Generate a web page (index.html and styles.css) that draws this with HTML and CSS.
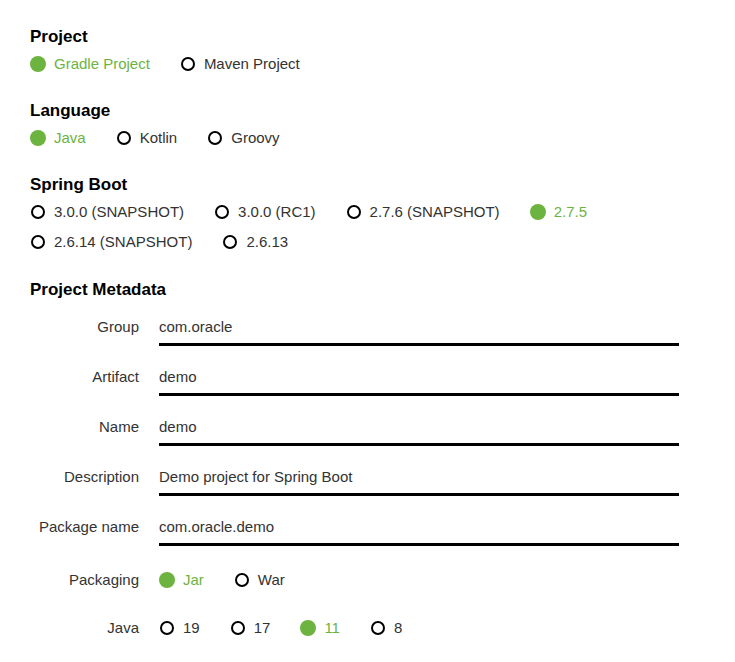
FILE: index.html
```html
<!DOCTYPE html>
<html lang="en">
<head>
  <meta charset="UTF-8">
  <title>Spring Initializr</title>
  <link rel="stylesheet" href="styles.css">
</head>
<body>
  <div class="section">
    <h2>Project</h2>
    <div class="radios">
      <span class="radio checked"><i></i>Gradle Project</span>
      <span class="radio"><i></i>Maven Project</span>
    </div>
  </div>

  <div class="section">
    <h2>Language</h2>
    <div class="radios">
      <span class="radio checked"><i></i>Java</span>
      <span class="radio"><i></i>Kotlin</span>
      <span class="radio"><i></i>Groovy</span>
    </div>
  </div>

  <div class="section boot">
    <h2>Spring Boot</h2>
    <div class="radios wrap">
      <span class="radio"><i></i>3.0.0 (SNAPSHOT)</span>
      <span class="radio"><i></i>3.0.0 (RC1)</span>
      <span class="radio"><i></i>2.7.6 (SNAPSHOT)</span>
      <span class="radio checked"><i></i>2.7.5</span>
      <span class="radio"><i></i>2.6.14 (SNAPSHOT)</span>
      <span class="radio"><i></i>2.6.13</span>
    </div>
  </div>

  <div class="section meta">
    <h2>Project Metadata</h2>
    <div class="field"><label>Group</label><div class="input">com.oracle</div></div>
    <div class="field"><label>Artifact</label><div class="input">demo</div></div>
    <div class="field"><label>Name</label><div class="input">demo</div></div>
    <div class="field"><label>Description</label><div class="input">Demo project for Spring Boot</div></div>
    <div class="field"><label>Package name</label><div class="input">com.oracle.demo</div></div>
    <div class="field pack">
      <label>Packaging</label>
      <div class="radios">
        <span class="radio checked"><i></i>Jar</span>
        <span class="radio"><i></i>War</span>
      </div>
    </div>
    <div class="field">
      <label>Java</label>
      <div class="radios">
        <span class="radio"><i></i>19</span>
        <span class="radio"><i></i>17</span>
        <span class="radio checked"><i></i>11</span>
        <span class="radio"><i></i>8</span>
      </div>
    </div>
  </div>
</body>
</html>
```

FILE: styles.css
```css
body { margin: 0; padding: 27px 30px 0; font-family: "Liberation Sans", Arial, sans-serif; font-size: 15px; line-height: 20px; color: #333; background: #fff; }
h2 { margin: 0 0 7px; font-size: 17px; line-height: 20px; font-weight: bold; color: #000; }
.section { margin-bottom: 27px; }
.boot { margin-bottom: 28px; }
.radios { display: flex; flex-wrap: wrap; row-gap: 10px; }
.radio { display: flex; align-items: center; margin-right: 30px; }
.radio i { width: 16px; height: 16px; display: flex; align-items: center; justify-content: center; margin-right: 8px; }
.radio i::before { content: ""; width: 10px; height: 10px; border: 2px solid #000; border-radius: 50%; }
.radio.checked { color: #6db33f; }
.radio.checked i::before { width: 16px; height: 16px; border: 0; background: #6db33f; }
.wrap { max-width: 640px; }
.meta h2 { margin-bottom: 17px; }
.field { display: flex; margin-bottom: 21px; }
.field label { width: 109px; text-align: right; margin-right: 20px; }
.input { width: 520px; padding-bottom: 6px; border-bottom: 3px solid #000; }
.pack { margin-top: 24px; margin-bottom: 28px; }
```
